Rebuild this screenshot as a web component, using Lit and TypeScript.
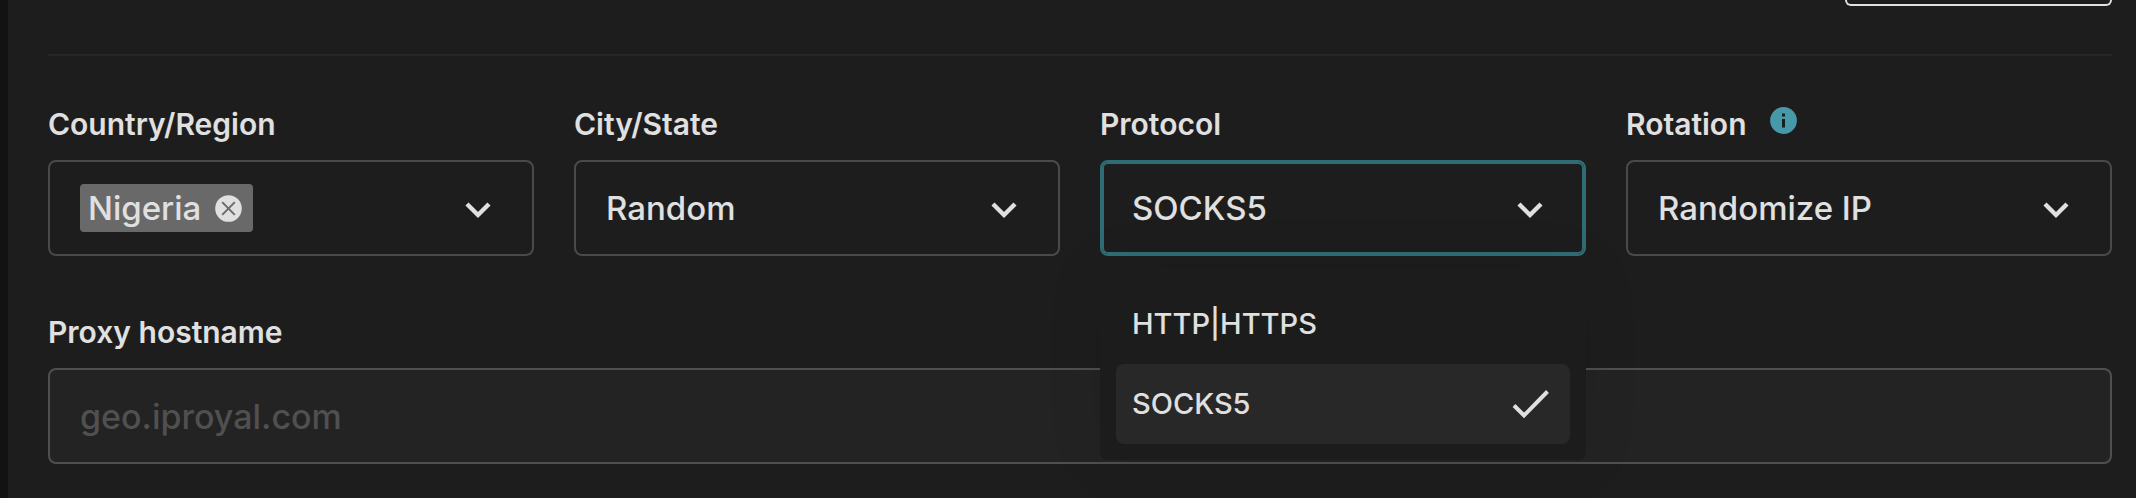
import { LitElement, html, css, svg } from "lit";
import { customElement, property } from "lit/decorators.js";
import { classMap } from "lit/directives/class-map.js";

const chevron = svg`<path d="M3 4 L14 15 L25 4" fill="none" stroke="currentColor" stroke-width="4.4"/>`;

@customElement("select-field")
class SelectField extends LitElement {
  @property() label = "";
  @property({ type: Array }) options: string[] = [];
  @property() value = "";
  @property({ type: Boolean }) open = false;
  @property({ type: Boolean }) multiple = false;
  @property({ type: Boolean }) info = false;

  static styles = css`
    :host { display: block; position: relative; min-width: 0; color: #e0e0e0; }
    .head { display: flex; align-items: center; gap: 24px; height: 36px; margin-bottom: 18px; }
    label, .label { font-size: 30px; line-height: 36px; font-weight: 600; }
    button { font: inherit; color: inherit; border: 0; padding: 0; background: none; cursor: pointer; }
    .info { display: flex; color: #4599a8; margin-bottom: 8px; }
    .box { display: flex; align-items: center; position: relative; height: 96px; box-sizing: border-box;
      border: 2px solid #4a4a4a; border-radius: 8px; }
    .box.open { border-color: #2f6d75; box-shadow: inset 0 0 0 2px #2f6d75; }
    select { appearance: none; flex: 1; min-width: 0; height: 100%; border: 0; outline: 0; margin: 0;
      padding: 0 88px 0 30px; background: none; color: inherit; font: 500 33px/40px Inter, sans-serif; cursor: pointer; }
    option { background: #1d1d1d; }
    .arrow { position: absolute; right: 40px; top: 38px; pointer-events: none; display: block; }
    .toggle { display: flex; margin-left: auto; margin-right: 40px; padding-top: 3px; }
    .chip { display: flex; align-items: center; gap: 14px; height: 48px; margin-left: 30px; padding: 0 11px 0 8px;
      box-sizing: border-box; border-radius: 4px; background: #696969; font-size: 33px; line-height: 48px; font-weight: 500; }
    .remove { display: flex; color: #e0e0e0; }
    .menu { position: absolute; z-index: 2; top: 162px; left: 0; right: 0; margin: 0; padding: 16px;
      border-radius: 8px; background: #1c1c1c; box-shadow: 0 0 60px rgba(0, 0, 0, 0.08); }
    .option { display: flex; align-items: center; justify-content: space-between; width: 100%; height: 80px;
      padding: 0 20px 0 16px; border-radius: 8px; font-size: 29px; line-height: 36px; font-weight: 500; text-align: left; }
    .option.selected { background: #282828; }
  `;

  private pick(v: string) { this.value = v; this.open = false; }

  private renderChip() {
    return html`<div class="box" role="group" aria-labelledby="lbl">
      <span class="chip">${this.value}
        <button class="remove" aria-label="Remove ${this.value}">
          <svg width="27" height="27" viewBox="0 0 27 27"><circle cx="13.5" cy="13.5" r="13.3" fill="currentColor"/>
            <path d="M7.2 7.2 L19.8 19.8 M19.8 7.2 L7.2 19.8" stroke="#696969" stroke-width="1.9"/></svg>
        </button>
      </span>
      <button class="toggle" aria-label="Show options"><svg width="28" height="19" viewBox="0 0 28 19">${chevron}</svg></button>
    </div>`;
  }

  private renderSelect() {
    return html`<div class=${classMap({ box: true, open: this.open })}>
      <select id="control" @change=${(e: Event) => this.pick((e.target as HTMLSelectElement).value)}>
        ${this.options.map((o) => html`<option ?selected=${o === this.value}>${o}</option>`)}
      </select>
      <svg class="arrow" width="28" height="19" viewBox="0 0 28 19">${chevron}</svg>
    </div>`;
  }

  private renderMenu() {
    return html`<div class="menu" role="listbox" aria-label=${this.label}>
      ${this.options.map((o) => html`<button role="option" aria-selected=${o === this.value}
        class=${classMap({ option: true, selected: o === this.value })} @click=${() => this.pick(o)}>${o}
        ${o === this.value ? html`<svg width="38" height="30" viewBox="0 0 38 30">
          <path d="M2 16.5 L12 26.5 L35.5 2.5" fill="none" stroke="currentColor" stroke-width="4"/></svg>` : ""}
      </button>`)}
    </div>`;
  }

  render() {
    return html`
      <div class="head">
        ${this.multiple ? html`<span class="label" id="lbl">${this.label}</span>` : html`<label for="control">${this.label}</label>`}
        ${this.info ? html`<button class="info" aria-label="About rotation"><svg width="27" height="27" viewBox="0 0 27 27">
          <circle cx="13.5" cy="13.5" r="13.4" fill="currentColor"/>
          <path d="M12 6.5h3v3h-3zM12 12h3v8.5h-3z" fill="#1d1d1d"/></svg></button>` : ""}
      </div>
      ${this.multiple ? this.renderChip() : this.renderSelect()}
      ${this.open ? this.renderMenu() : ""}
    `;
  }
}

@customElement("app-root")
class AppRoot extends LitElement {
  static styles = css`
    :host { display: block; min-height: 100vh; box-sizing: border-box; border-left: 8px solid #121212;
      background: #1d1d1d; color: #e0e0e0; font-family: Inter, sans-serif; }
    .page { padding: 0 24px 0 40px; }
    .top { display: flex; justify-content: flex-end; height: 54px; align-items: flex-start; border-bottom: 2px solid #272727; }
    .action { width: 267px; height: 6px; box-sizing: border-box; border: 2px solid #e0e0e0; border-top: 0;
      border-radius: 0 0 8px 8px; background: none; padding: 0; }
    .fields { display: grid; grid-template-columns: repeat(4, minmax(0, 1fr)); gap: 40px; padding-top: 50px; }
    .host { display: flex; flex-direction: column; gap: 18px; padding-top: 58px; }
    .host label { font-size: 30px; line-height: 36px; font-weight: 600; }
    .host input { height: 96px; box-sizing: border-box; width: 100%; border: 2px solid #4f4f4f; border-radius: 8px;
      background: #232323; color: #e0e0e0; padding: 0 30px; font: 500 34px/40px Inter, sans-serif; outline: 0; }
    .host input::placeholder { color: #505050; opacity: 1; }
  `;

  render() {
    return html`<main class="page">
      <div class="top"><button class="action" aria-label="Action"></button></div>
      <div class="fields">
        <select-field label="Country/Region" value="Nigeria" multiple></select-field>
        <select-field label="City/State" value="Random" .options=${["Random"]}></select-field>
        <select-field label="Protocol" value="SOCKS5" open .options=${["HTTP|HTTPS", "SOCKS5"]}></select-field>
        <select-field label="Rotation" value="Randomize IP" info .options=${["Randomize IP"]}></select-field>
      </div>
      <div class="host">
        <label for="hostname">Proxy hostname</label>
        <input id="hostname" placeholder="geo.iproyal.com" />
      </div>
    </main>`;
  }
}
